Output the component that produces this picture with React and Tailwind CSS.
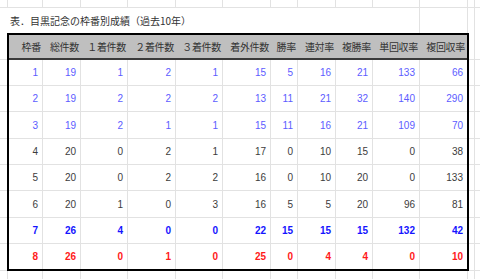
import React from "react";

const headers = ["枠番", "総件数", "１着件数", "２着件数", "３着件数", "着外件数", "勝率", "連対率", "複勝率", "単回収率", "複回収率"];

const rows = [
  { v: [1, 19, 1, 2, 1, 15, 5, 16, 21, 133, 66], c: "text-[#5c5cff]", h: "h-[26px] border-b" },
  { v: [2, 19, 2, 2, 2, 13, 11, 21, 32, 140, 290], c: "text-[#5c5cff]", h: "h-[26px] border-b" },
  { v: [3, 19, 2, 1, 1, 15, 11, 16, 21, 109, 70], c: "text-[#5c5cff]", h: "h-[27px] border-b" },
  { v: [4, 20, 0, 2, 1, 17, 0, 10, 15, 0, 38], c: "text-[#3c3c3c]", h: "h-[26px] border-b" },
  { v: [5, 20, 0, 2, 2, 16, 0, 10, 20, 0, 133], c: "text-[#3c3c3c]", h: "h-[26px] border-b" },
  { v: [6, 20, 1, 0, 3, 16, 5, 5, 20, 96, 81], c: "text-[#3c3c3c]", h: "h-[27px] border-b" },
  { v: [7, 26, 4, 0, 0, 22, 15, 15, 15, 132, 42], c: "text-[#1515ff] font-bold", h: "h-[26px] border-b" },
  { v: [8, 26, 0, 1, 0, 25, 0, 4, 4, 0, 10], c: "text-[#ff1a1a] font-bold", h: "h-[25px]" },
];

const sideHeights = ["h-[27px]", "h-[26px]", "h-[26px]", "h-[27px]", "h-[26px]", "h-[26px]", "h-[27px]", "h-[26px]", "h-[27px]"];

const stripCols = "grid grid-cols-[8px_35px_38px_47px_48px_47px_48px_27px_38px_37px_47px_48px_7px_5px]";
const tableCols = "grid grid-cols-[34px_38px_47px_48px_47px_48px_27px_38px_37px_47px_47px]";

function Strip({ h }) {
  return (
    <div className={`${stripCols} ${h}`}>
      {Array.from({ length: 14 }).map((_, i) => (
        <div key={i} className={i < 13 ? "border-r border-[#e2e2e2]" : ""} />
      ))}
    </div>
  );
}

export default function App() {
  return (
    <div className="w-[480px] h-[279px] bg-white overflow-hidden font-['Liberation_Sans','Noto_Sans_CJK_JP',sans-serif]">
      <div className="border-b border-[#e2e2e2]">
        <Strip h="h-[7px]" />
      </div>
      <div className="flex h-[25px]">
        <div className="w-[420px] border-r border-[#e2e2e2] flex items-center pl-[10px] text-[10px] text-[#333] font-['Noto_Sans_CJK_JP',sans-serif] whitespace-nowrap">
          表．目黒記念の枠番別成績（過去10年）
        </div>
        <div className="w-[48px] border-r border-[#e2e2e2]" />
        <div className="w-[7px] border-r border-[#e2e2e2]" />
        <div className="flex-1" />
      </div>
      <div className="flex">
        <div className="w-[7px] flex flex-col">
          {sideHeights.map((h, i) => (
            <div key={i} className={`${h} border-b border-[#e2e2e2]`} />
          ))}
        </div>
        <div className="w-[462px] border-2 border-black">
          <div className={`${tableCols} h-[25px] bg-[#bfbfbf] border-b-2 border-[#3a3a3a]`}>
            {headers.map((t, i) => (
              <div key={i} className="flex items-center justify-end pr-[2px] text-[10px] text-[#333] font-['Noto_Sans_CJK_JP',sans-serif] whitespace-nowrap tracking-[-0.3px]">
                {t}
              </div>
            ))}
          </div>
          {rows.map((r, ri) => (
            <div key={ri} className={`${tableCols} ${r.h} border-[#e2e2e2]`}>
              {r.v.map((n, i) => (
                <div
                  key={i}
                  className={`flex items-center justify-end pr-[4px] text-[10px] ${r.c} ${i < 10 ? "border-r border-[#e2e2e2]" : ""}`}
                >
                  {n}
                </div>
              ))}
            </div>
          ))}
        </div>
        <div className="flex-1 flex flex-col">
          {sideHeights.map((h, i) => (
            <div key={i} className={`${h} border-b border-[#e2e2e2] flex`}>
              <div className="w-[6px] border-r border-[#e2e2e2]" />
            </div>
          ))}
        </div>
      </div>
      <Strip h="h-[8px]" />
    </div>
  );
}
